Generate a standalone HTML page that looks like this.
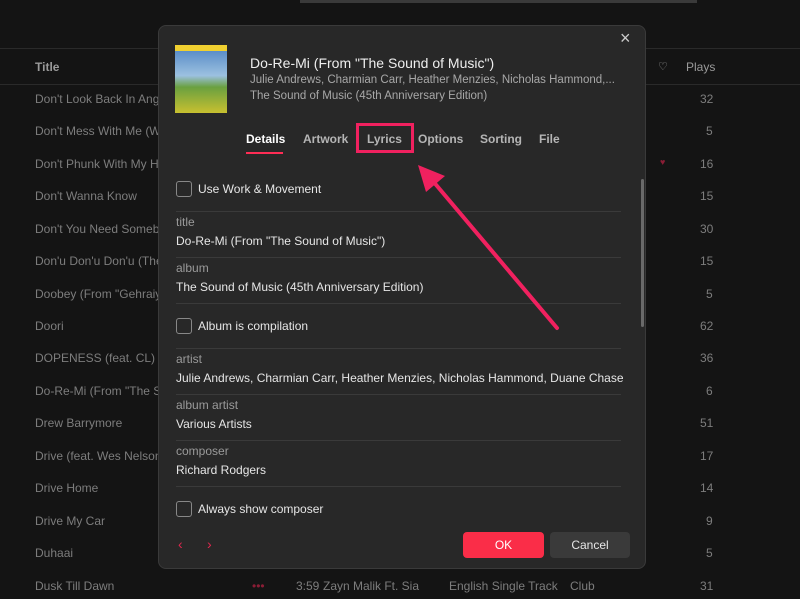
<!DOCTYPE html><html><head><style>
body{margin:0;width:800px;height:599px;background:#141414;font-family:"Liberation Sans",sans-serif;position:relative;overflow:hidden;color:#8a8a8a}
.a{position:absolute;white-space:nowrap}
.row{position:absolute;left:0;width:800px;font-size:12px;color:#7d7d7d}
.line{position:absolute;height:1px;background:#2a2a2a}
.dlg{position:absolute;left:158px;top:25px;width:488px;height:544px;background:#282828;border-radius:8px;border:1px solid #3a3a3a;box-sizing:border-box}
.lab{position:absolute;left:17px;font-size:12px;color:#9a9a9a}
.val{position:absolute;left:17px;font-size:12px;color:#e6e6e6;white-space:nowrap;width:447px;overflow:hidden}
.sep{position:absolute;left:17px;width:445px;height:1px;background:#3a3a3a}
.cb{position:absolute;left:17px;width:14px;height:14px;border:1px solid #888;border-radius:3px}
.tab{position:absolute;top:106px;font-size:12px;font-weight:bold;color:#b5b5b5}
</style></head><body>
<div class="a" style="left:300px;top:0;width:397px;height:3px;background:#3a3a3a"></div>
<div class="line" style="left:0;top:48px;width:800px"></div>
<div class="line" style="left:0;top:84px;width:800px"></div>
<div class="a" style="left:35px;top:60px;font-size:12px;color:#9a9a9a;font-weight:bold">Title</div>
<div class="a" style="left:658px;top:60px;font-size:11px;color:#9a9a9a">♡</div>
<div class="a" style="left:686px;top:60px;font-size:12px;color:#9a9a9a">Plays</div>
<div class="row" style="top:92px"><span class="a" style="left:35px">Don't Look Back In Anger</span><span class="a" style="left:700px">32</span></div>
<div class="row" style="top:124px"><span class="a" style="left:35px">Don't Mess With Me (Wh</span><span class="a" style="left:706px">5</span></div>
<div class="row" style="top:157px"><span class="a" style="left:35px">Don't Phunk With My He</span><span class="a" style="left:660px;color:#8a1d35;font-size:9px">♥</span><span class="a" style="left:700px">16</span></div>
<div class="row" style="top:189px"><span class="a" style="left:35px">Don't Wanna Know</span><span class="a" style="left:700px">15</span></div>
<div class="row" style="top:222px"><span class="a" style="left:35px">Don't You Need Somebo</span><span class="a" style="left:700px">30</span></div>
<div class="row" style="top:254px"><span class="a" style="left:35px">Don'u Don'u Don'u (The</span><span class="a" style="left:700px">15</span></div>
<div class="row" style="top:287px"><span class="a" style="left:35px">Doobey (From "Gehraiya</span><span class="a" style="left:706px">5</span></div>
<div class="row" style="top:319px"><span class="a" style="left:35px">Doori</span><span class="a" style="left:700px">62</span></div>
<div class="row" style="top:351px"><span class="a" style="left:35px">DOPENESS (feat. CL)</span><span class="a" style="left:700px">36</span></div>
<div class="row" style="top:384px"><span class="a" style="left:35px">Do-Re-Mi (From "The So</span><span class="a" style="left:706px">6</span></div>
<div class="row" style="top:416px"><span class="a" style="left:35px">Drew Barrymore</span><span class="a" style="left:700px">51</span></div>
<div class="row" style="top:449px"><span class="a" style="left:35px">Drive (feat. Wes Nelson)</span><span class="a" style="left:700px">17</span></div>
<div class="row" style="top:481px"><span class="a" style="left:35px">Drive Home</span><span class="a" style="left:700px">14</span></div>
<div class="row" style="top:514px"><span class="a" style="left:35px">Drive My Car</span><span class="a" style="left:706px">9</span></div>
<div class="row" style="top:546px"><span class="a" style="left:35px">Duhaai</span><span class="a" style="left:706px">5</span></div>
<div class="row" style="top:579px"><span class="a" style="left:35px">Dusk Till Dawn</span><span class="a" style="left:252px;color:#8a1d35">•••</span><span class="a" style="left:296px">3:59</span><span class="a" style="left:323px">Zayn Malik Ft. Sia</span><span class="a" style="left:449px">English Single Track</span><span class="a" style="left:570px">Club</span><span class="a" style="left:700px">31</span></div>

<div class="dlg">
<div class="a" style="left:16px;top:19px;width:52px;height:68px;background:linear-gradient(#f0d030 0 6px,#5b8ec8 6px,#9cc0e0 45%,#6aa040 62%,#c8c030 100%)"></div>
<div class="a" style="left:461px;top:2px;font-size:18px;color:#ccc">×</div>
<div class="a" style="left:91px;top:29px;font-size:14px;color:#eee">Do-Re-Mi (From "The Sound of Music")</div>
<div class="a" style="left:91px;top:48px;font-size:11.5px;color:#a8a8a8">Julie Andrews, Charmian Carr, Heather Menzies, Nicholas Hammond,...</div>
<div class="a" style="left:91px;top:64px;font-size:11.5px;color:#a8a8a8">The Sound of Music (45th Anniversary Edition)</div>
<div class="tab" style="left:87px;color:#fff">Details</div>
<div class="a" style="left:87px;top:126px;width:37px;height:2px;background:#ff2d55"></div>
<div class="tab" style="left:144px">Artwork</div>
<div class="tab" style="left:208px">Lyrics</div>
<div class="tab" style="left:259px">Options</div>
<div class="tab" style="left:321px">Sorting</div>
<div class="tab" style="left:380px">File</div>
<div class="a" style="left:197px;top:97px;width:52px;height:24px;border:3px solid #f0215f"></div>
<div class="a" style="left:482px;top:153px;width:3px;height:148px;background:#6a6a6a;border-radius:2px"></div>
<div class="cb" style="top:155px"></div><div class="a" style="left:39px;top:156px;font-size:12px;color:#e6e6e6">Use Work &amp; Movement</div>
<div class="sep" style="top:185px"></div>
<div class="lab" style="top:189px">title</div><div class="val" style="top:208px">Do-Re-Mi (From "The Sound of Music")</div>
<div class="sep" style="top:231px"></div>
<div class="lab" style="top:235px">album</div><div class="val" style="top:254px">The Sound of Music (45th Anniversary Edition)</div>
<div class="sep" style="top:277px"></div>
<div class="cb" style="top:292px"></div><div class="a" style="left:39px;top:293px;font-size:12px;color:#e6e6e6">Album is compilation</div>
<div class="sep" style="top:322px"></div>
<div class="lab" style="top:326px">artist</div><div class="val" style="top:345px">Julie Andrews, Charmian Carr, Heather Menzies, Nicholas Hammond, Duane Chase, Angela</div>
<div class="sep" style="top:368px"></div>
<div class="lab" style="top:372px">album artist</div><div class="val" style="top:391px">Various Artists</div>
<div class="sep" style="top:414px"></div>
<div class="lab" style="top:418px">composer</div><div class="val" style="top:437px">Richard Rodgers</div>
<div class="sep" style="top:460px"></div>
<div class="cb" style="top:475px"></div><div class="a" style="left:39px;top:476px;font-size:12px;color:#e6e6e6">Always show composer</div>
<div class="a" style="left:19px;top:510px;font-size:14px;color:#e0284f">‹</div>
<div class="a" style="left:48px;top:510px;font-size:14px;color:#e0284f">›</div>
<div class="a" style="left:304px;top:506px;width:81px;height:26px;background:#fa2d48;border-radius:4px;color:#fff;font-size:12px;text-align:center;line-height:26px">OK</div>
<div class="a" style="left:391px;top:506px;width:80px;height:26px;background:#3a3a3a;border-radius:4px;color:#e6e6e6;font-size:12px;text-align:center;line-height:26px">Cancel</div>
</div>
<svg class="a" style="left:0;top:0" width="800" height="599"><line x1="557" y1="328" x2="432" y2="180" stroke="#f0215f" stroke-width="4" stroke-linecap="round"/><polygon points="418,165 445,176 426,192" fill="#f0215f"/></svg>
</body></html>
